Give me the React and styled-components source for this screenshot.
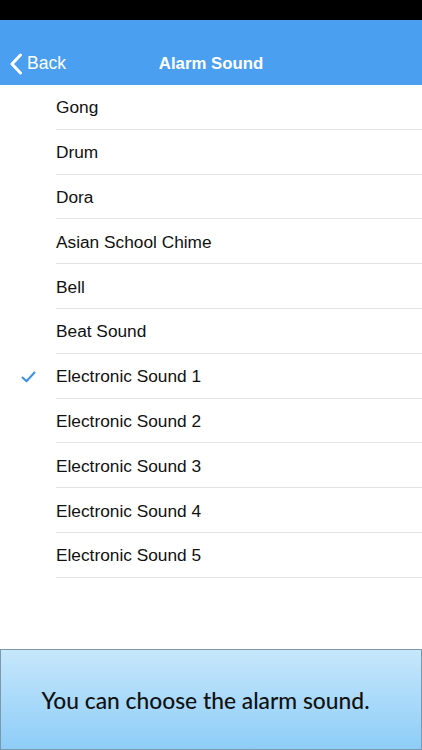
import React from "react";
import styled, { createGlobalStyle } from "styled-components";

const Global = createGlobalStyle`
  html, body { margin: 0; padding: 0; background: #fff; }
  #root { width: 422px; height: 750px; }
`;

const Screen = styled.div`
  width: 422px;
  height: 750px;
  display: flex;
  flex-direction: column;
  background: #fff;
  font-family: "Liberation Sans", Arial, sans-serif;
  overflow: hidden;
`;

const StatusBar = styled.div`
  height: 20px;
  background: #000;
  flex: none;
`;

const NavBar = styled.div`
  height: 65px;
  flex: none;
  box-sizing: border-box;
  padding-top: 22px;
  background: #4b9ff0;
  position: relative;
  display: flex;
  align-items: center;
  justify-content: center;
`;

const BackButton = styled.div`
  position: absolute;
  left: 9px;
  top: 22px;
  bottom: 0;
  display: flex;
  align-items: center;
  gap: 4px;
  color: #fff;
  font-size: 17.5px;
`;

const Title = styled.div`
  color: #fff;
  font-size: 16.8px;
  font-weight: bold;
`;

const List = styled.div`
  display: flex;
  flex-direction: column;
`;

const Row = styled.div`
  height: 44.8px;
  display: grid;
  grid-template-columns: 56px 1fr;
  align-items: center;
  box-sizing: border-box;
`;

const CheckCell = styled.div`
  display: flex;
  justify-content: center;
  padding-top: 2px;
`;

const Label = styled.div`
  height: 100%;
  display: flex;
  align-items: center;
  border-bottom: 1px solid #e3e3e6;
  box-sizing: border-box;
  font-size: 17.3px;
  color: #111;
  padding-top: 2px;
`;

const Spacer = styled.div`
  flex: 1;
`;

const Banner = styled.div`
  height: 101px;
  flex: none;
  box-sizing: border-box;
  border: 1px solid #7d97ab;
  background: linear-gradient(#c6e7fb, #8ecdf8);
  display: flex;
  align-items: center;
  justify-content: center;
  padding-right: 11px;
`;

const BannerText = styled.div`
  font-family: "Lato", "Noto Sans", sans-serif;
  font-size: 22.8px;
  font-weight: 500;
  letter-spacing: 0;
  color: #111;
`;

const sounds = [
  "Gong",
  "Drum",
  "Dora",
  "Asian School Chime",
  "Bell",
  "Beat Sound",
  "Electronic Sound 1",
  "Electronic Sound 2",
  "Electronic Sound 3",
  "Electronic Sound 4",
  "Electronic Sound 5",
];

const Check = () => (
  <svg width="15" height="12" viewBox="0 0 15 12">
    <path d="M1.5 6.5 L5.5 10.2 L13.5 1.5" fill="none" stroke="#3b8fe6" strokeWidth="2" strokeLinecap="round" strokeLinejoin="round" />
  </svg>
);

const Chevron = () => (
  <svg width="14" height="22" viewBox="0 0 14 22">
    <path d="M11.5 2 L3 11 L11.5 20" fill="none" stroke="#fff" strokeWidth="3" strokeLinecap="round" strokeLinejoin="round" />
  </svg>
);

export default function App() {
  const selected = "Electronic Sound 1";
  return (
    <>
      <Global />
      <Screen>
        <StatusBar />
        <NavBar>
          <BackButton>
            <Chevron />
            <span>Back</span>
          </BackButton>
          <Title>Alarm Sound</Title>
        </NavBar>
        <List>
          {sounds.map((s) => (
            <Row key={s}>
              <CheckCell>{s === selected && <Check />}</CheckCell>
              <Label>{s}</Label>
            </Row>
          ))}
        </List>
        <Spacer />
        <Banner>
          <BannerText>You can choose the alarm sound.</BannerText>
        </Banner>
      </Screen>
    </>
  );
}
